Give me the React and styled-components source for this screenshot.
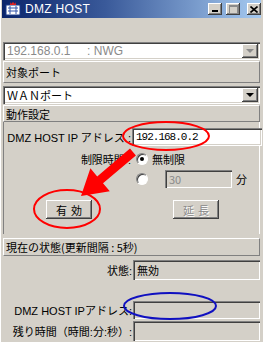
import styled, { createGlobalStyle } from "styled-components";

const GlobalStyle = createGlobalStyle`
  html, body { margin: 0; padding: 0; background: #d4d0c8; }
  body { font-family: "Liberation Sans", "Noto Sans CJK JP", sans-serif; font-size: 11px; color: #000; }
`;

const Window = styled.div`
  position: relative;
  width: 263px;
  height: 342px;
  overflow: hidden;
  background: #d4d0c8;
  box-sizing: border-box;
  border-left: 1px solid #fff;
  display: flex;
  flex-direction: column;
`;

const TitleBar = styled.div`
  height: 18px;
  margin: 0 2px 0 1px;
  background: linear-gradient(to right, #0a246a 0%, #3a5a9a 40%, #a6caf0 100%);
  display: flex;
  align-items: center;
  padding-left: 3px;
  gap: 4px;
`;

const Title = styled.span`
  color: #fff;
  font-size: 12px;
  letter-spacing: 0.3px;
  flex: 1;
`;

const CaptionButton = styled.div`
  width: 14px;
  height: 12px;
  margin-right: ${(p) => (p.$gap ? "3px" : "0")};
  background: #d4d0c8;
  box-shadow: inset -1px -1px #404040, inset 1px 1px #fff, inset -2px -2px #808080;
  display: flex;
  align-items: center;
  justify-content: center;
`;

const Body = styled.div`
  display: flex;
  flex-direction: column;
  padding: 24px 3px 0 2px;
`;

const Combo = styled.div`
  height: ${(p) => p.$h}px;
  box-sizing: border-box;
  background: #fff;
  box-shadow: inset 1px 1px #808080, inset 2px 2px #404040, inset -1px -1px #fff, inset -2px -2px #d4d0c8;
  display: flex;
  align-items: center;
  padding: 2px;
  margin-top: ${(p) => p.$mt || 0}px;
`;

const ComboText = styled.span`
  flex: 1;
  padding-left: 2px;
  color: ${(p) => (p.$disabled ? "#8a8a8a" : "#000")};
  white-space: pre;
  font-size: ${(p) => (p.$disabled ? 12 : 11)}px;
`;

const ArrowButton = styled.div`
  width: 16px;
  align-self: stretch;
  background: #d4d0c8;
  box-shadow: inset -1px -1px #404040, inset 1px 1px #fff, inset -2px -2px #808080;
  display: flex;
  align-items: center;
  justify-content: center;
`;

const Arrow = styled.div`
  width: 0;
  height: 0;
  border-left: 4px solid transparent;
  border-right: 4px solid transparent;
  border-top: 4px solid ${(p) => (p.$disabled ? "#8a8a8a" : "#000")};
`;

const Bar = styled.div`
  height: ${(p) => p.$h}px;
  margin-top: ${(p) => p.$mt || 0}px;
  box-sizing: border-box;
  border-top: 1px solid #fff;
  border-left: 1px solid #fff;
  border-right: 1px solid #808080;
  border-bottom: 1px solid #808080;
  display: flex;
  align-items: center;
  padding-left: 2px;
  font-size: 11px;
  font-family: "Noto Sans CJK JP", sans-serif;
`;

const Panel = styled.div`
  height: 112px;
  box-sizing: border-box;
  border-left: 1px solid #808080;
  border-right: 1px solid #fff;
  display: flex;
  flex-direction: column;
  padding-top: 6px;
`;

const FormRow = styled.div`
  display: grid;
  grid-template-columns: 128px 1fr;
  align-items: center;
  height: ${(p) => p.$h}px;
  margin-top: ${(p) => p.$mt || 0}px;
`;

const Label = styled.span`
  text-align: right;
  white-space: nowrap;
  font-size: 11px;
  padding-right: 1px;
`;

const Field = styled.div`
  height: ${(p) => p.$h || 18}px;
  box-sizing: border-box;
  background: ${(p) => (p.$white ? "#fff" : "#d4d0c8")};
  box-shadow: inset 1px 1px #808080, inset 2px 2px #404040, inset -1px -1px #fff, inset -2px -2px #d4d0c8;
  display: flex;
  align-items: center;
  padding-left: 4px;
  width: ${(p) => (p.$w ? `${p.$w}px` : "auto")};
  margin-left: ${(p) => p.$ml || 0}px;
  color: ${(p) => (p.$disabled ? "#8a8a8a" : "#000")};
  font-size: 11px;
  font-family: "Noto Sans CJK JP", sans-serif;
`;

const IpText = styled.span`
  font-family: "Liberation Mono", monospace;
  font-size: 11px;
  letter-spacing: -1px;
`;

const RadioLine = styled.div`
  display: flex;
  align-items: center;
  gap: 4px;
  padding-left: 4px;
`;

const Radio = styled.span`
  width: 12px;
  height: 12px;
  border-radius: 50%;
  background: #fff;
  box-sizing: border-box;
  border: 1px solid;
  border-color: #808080 #fff #fff #808080;
  box-shadow: inset 1px 1px #404040;
  display: flex;
  align-items: center;
  justify-content: center;
  &::after {
    content: "";
    display: ${(p) => (p.$checked ? "block" : "none")};
    width: 4px;
    height: 4px;
    border-radius: 50%;
    background: #000;
  }
`;

const ButtonRow = styled.div`
  display: flex;
  align-items: center;
  margin-top: 12px;
  padding-left: 42px;
`;

const Button = styled.div`
  width: 46px;
  height: 19px;
  box-sizing: border-box;
  background: #d4d0c8;
  box-shadow: inset -1px -1px #404040, inset 1px 1px #fff, inset -2px -2px #808080;
  display: flex;
  align-items: center;
  justify-content: center;
  letter-spacing: 4px;
  padding-left: 4px;
  margin-left: ${(p) => p.$ml || 0}px;
  color: ${(p) => (p.$disabled ? "#8a8a8a" : "#000")};
  text-shadow: ${(p) => (p.$disabled ? "1px 1px #fff" : "none")};
  font-family: "Noto Sans CJK JP", sans-serif;
  font-size: 11px;
`;

const StatusRow = styled(FormRow)`
  grid-template-columns: 130px 1fr;
`;

const Overlay = styled.svg`
  position: absolute;
  left: 0;
  top: 0;
  pointer-events: none;
`;

function AppIcon() {
  return (
    <svg width="16" height="14" viewBox="0 0 16 14">
      <rect x="1" y="3" width="14" height="10" fill="#fff" stroke="#1a3a8a" />
      <path d="M3 6h10M3 9h10M5 4v8M11 4v8" stroke="#3355aa" strokeWidth="1" />
      <path d="M5 0l1 2 2-2 2 2 1-2v3H5z" fill="#e02020" />
    </svg>
  );
}

export default function App() {
  return (
    <>
      <GlobalStyle />
      <Window>
        <TitleBar>
          <AppIcon />
          <Title>DMZ HOST</Title>
          <CaptionButton>
            <svg width="8" height="8"><rect x="1" y="5" width="6" height="2" fill="#000" /></svg>
          </CaptionButton>
          <CaptionButton $gap>
            <svg width="9" height="9"><rect x="0.5" y="0.5" width="8" height="8" fill="none" stroke="#8a8a8a" /><rect x="1" y="1" width="7" height="1" fill="#8a8a8a" /></svg>
          </CaptionButton>
          <CaptionButton>
            <svg width="8" height="7"><path d="M0.5 0.5l7 6M7.5 0.5l-7 6" stroke="#000" strokeWidth="1.6" /></svg>
          </CaptionButton>
        </TitleBar>
        <Body>
          <Combo $h={18}>
            <ComboText $disabled>{"192.168.0.1     : NWG"}</ComboText>
            <ArrowButton><Arrow $disabled /></ArrowButton>
          </Combo>
          <Bar $h={22} $mt={1}>対象ポート</Bar>
          <Combo $h={18} $mt={3}>
            <ComboText>ＷＡＮポート</ComboText>
            <ArrowButton><Arrow /></ArrowButton>
          </Combo>
          <Bar $h={17} $mt={1}>動作設定</Bar>
          <Panel>
            <FormRow $h={18}>
              <Label>DMZ HOST IP アドレス :</Label>
              <Field $white $h={18} style={{ marginRight: -3 }}>
                <IpText>192.168.0.2</IpText>
              </Field>
            </FormRow>
            <FormRow $h={14} $mt={5}>
              <Label>制限時間 :</Label>
              <RadioLine>
                <Radio $checked />
                <span>無制限</span>
              </RadioLine>
            </FormRow>
            <FormRow $h={18} $mt={5}>
              <span />
              <RadioLine>
                <Radio />
                <Field $w={67} $h={18} $ml={13} $disabled>30</Field>
                <span>分</span>
              </RadioLine>
            </FormRow>
            <ButtonRow>
              <Button>有効</Button>
              <Button $ml={81} $disabled>延長</Button>
            </ButtonRow>
          </Panel>
          <Bar $h={18} $mt={4}>現在の状態(更新間隔 : 5秒)</Bar>
          <StatusRow $h={20} $mt={4}>
            <Label>状態:</Label>
            <Field $h={20}>無効</Field>
          </StatusRow>
          <StatusRow $h={18} $mt={21}>
            <Label>DMZ HOST IPアドレス:</Label>
            <Field $h={18} />
          </StatusRow>
          <StatusRow $h={20} $mt={2}>
            <Label>残り時間（時間:分:秒）:</Label>
            <Field $h={20} />
          </StatusRow>
        </Body>
        <Overlay width="263" height="342">
          <ellipse cx="165" cy="136" rx="43" ry="14" fill="none" stroke="#f00" strokeWidth="2" />
          <ellipse cx="66" cy="209" rx="33" ry="19" fill="none" stroke="#f00" strokeWidth="2" />
          <ellipse cx="169" cy="306" rx="46" ry="13" fill="none" stroke="#1010c0" strokeWidth="2" />
          <path d="M129 148.6 L96.2 176.4 L89.4 168.3 L80 196 L108.8 191.3 L102 183.2 L134.9 155.4 Z" fill="#f00" />
        </Overlay>
      </Window>
    </>
  );
}
